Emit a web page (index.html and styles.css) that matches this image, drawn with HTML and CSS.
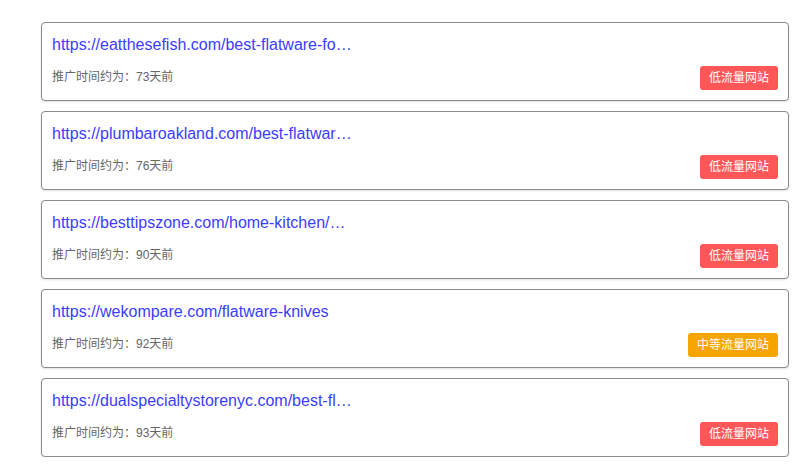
FILE: index.html
```html
<!DOCTYPE html>
<html lang="zh">
<head>
<meta charset="utf-8">
<link rel="stylesheet" href="styles.css">
</head>
<body>
<div class="list">
  <div class="card">
    <a class="url">https://eatthesefish.com/best-flatware-fo…</a>
    <div class="meta">
      <span class="date">推广时间约为：73天前</span>
      <span class="badge low">低流量网站</span>
    </div>
  </div>
  <div class="card">
    <a class="url">https://plumbaroakland.com/best-flatwar…</a>
    <div class="meta">
      <span class="date">推广时间约为：76天前</span>
      <span class="badge low">低流量网站</span>
    </div>
  </div>
  <div class="card">
    <a class="url">https://besttipszone.com/home-kitchen/…</a>
    <div class="meta">
      <span class="date">推广时间约为：90天前</span>
      <span class="badge low">低流量网站</span>
    </div>
  </div>
  <div class="card">
    <a class="url">https://wekompare.com/flatware-knives</a>
    <div class="meta">
      <span class="date">推广时间约为：92天前</span>
      <span class="badge mid">中等流量网站</span>
    </div>
  </div>
  <div class="card">
    <a class="url">https://dualspecialtystorenyc.com/best-fl…</a>
    <div class="meta">
      <span class="date">推广时间约为：93天前</span>
      <span class="badge low">低流量网站</span>
    </div>
  </div>
</div>
</body>
</html>
```

FILE: styles.css
```css
html, body {
  margin: 0;
  padding: 0;
  background: #fff;
}
body {
  font-family: "Liberation Sans", Arial, "Noto Sans CJK SC", sans-serif;
}
.list {
  padding: 22px 0 0 41px;
  display: flex;
  flex-direction: column;
  gap: 10px;
}
.card {
  box-sizing: border-box;
  width: 748px;
  height: 79px;
  border: 1px solid #8a8a8a;
  border-radius: 4px;
  padding: 10px;
  box-shadow: 0 1px 2px rgba(0,0,0,0.12);
  background: #fff;
}
.url {
  display: block;
  white-space: nowrap;
  font-size: 16px;
  line-height: 24px;
  color: #3c3cff;
  margin-bottom: 9px;
}
.meta {
  display: flex;
  justify-content: space-between;
  align-items: center;
  height: 24px;
}
.date {
  font-size: 12px;
  line-height: 23px;
  color: #666;
  align-self: flex-start;
}
.badge {
  font-size: 12px;
  line-height: 24px;
  height: 24px;
  padding: 0 9px;
  color: #fff;
  border-radius: 3px;
}
.low { background: #ff5658; }
.mid { background: #f6a400; }
```
